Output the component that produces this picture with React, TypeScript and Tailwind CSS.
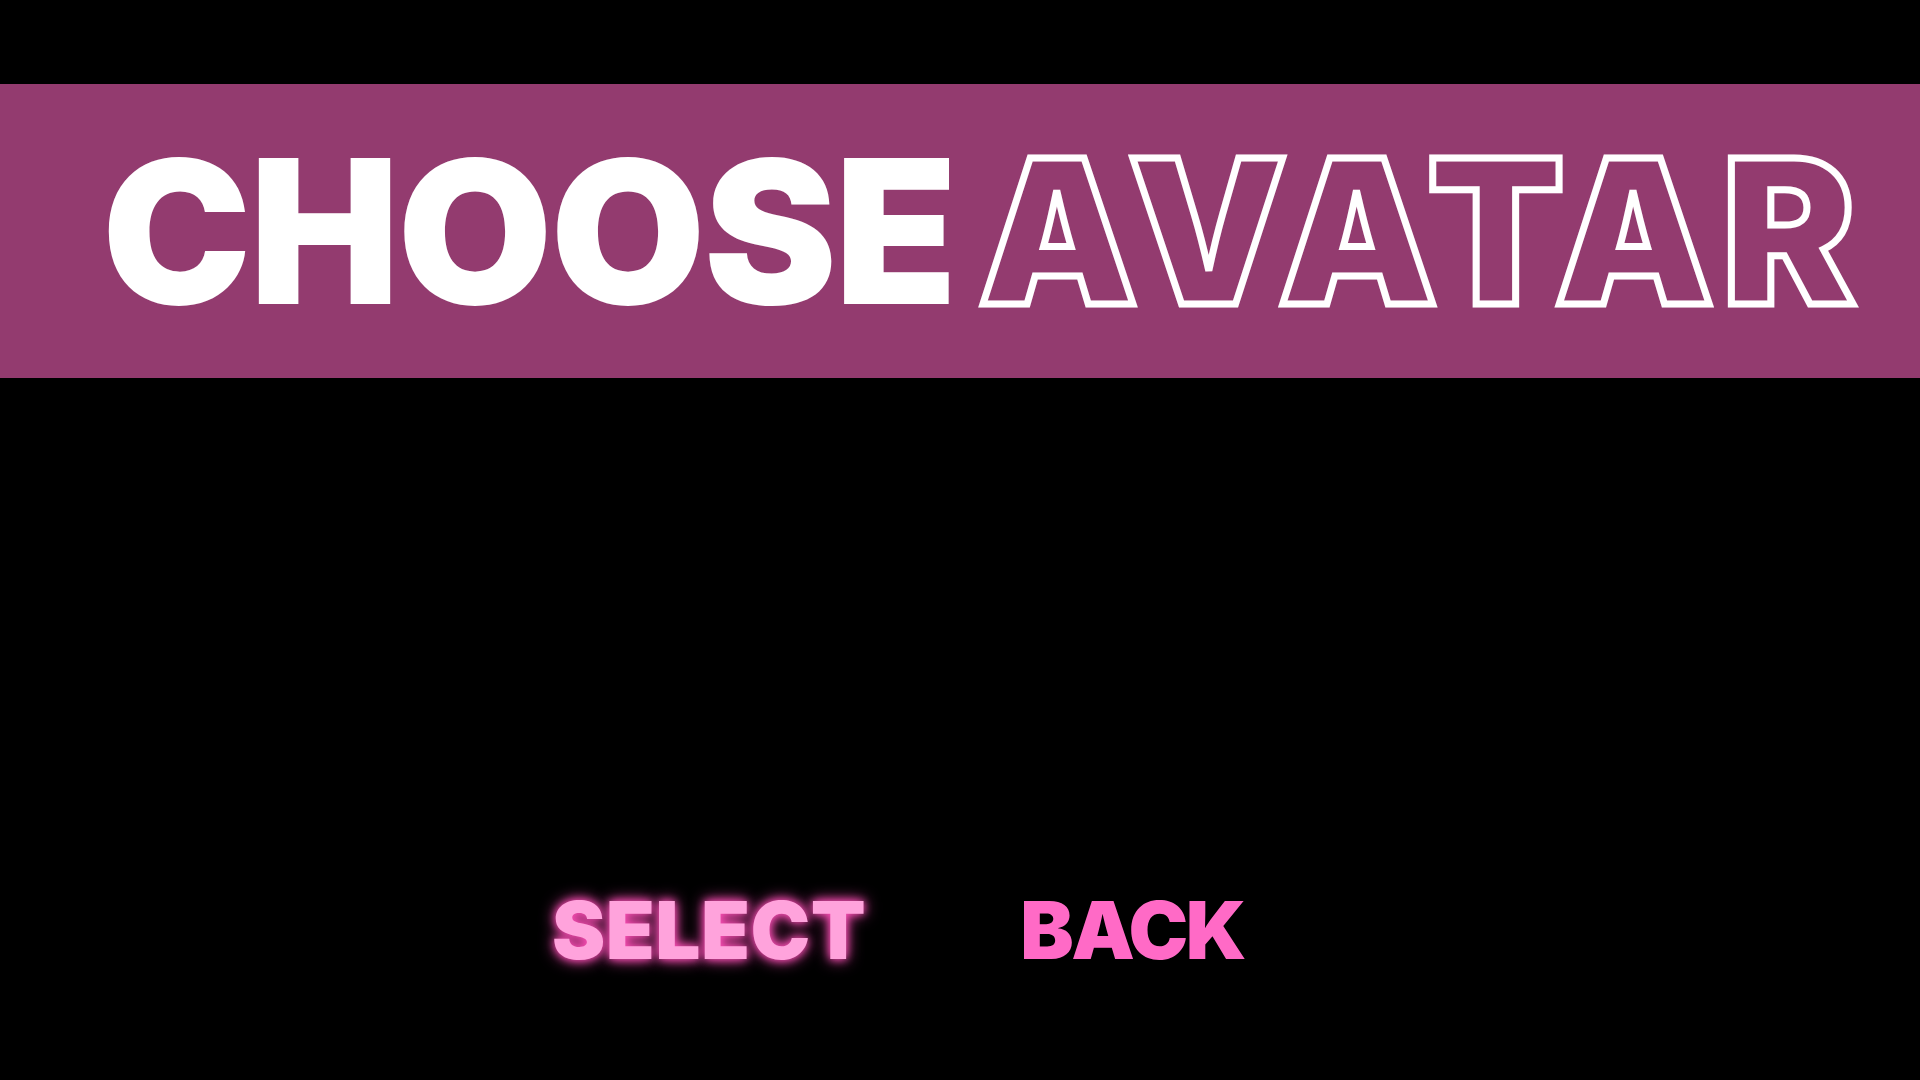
import React from "react";

export default function App() {
  return (
    <div className="w-[1920px] h-[1080px] bg-black overflow-hidden flex flex-col" style={{ fontFamily: "Inter, 'Noto Sans', sans-serif" }}>
      <div className="h-[84px]" />
      <div className="h-[294px] bg-[#933b6f] flex items-center pl-[102px]">
        <h1 className="text-[200px] leading-none font-black uppercase text-white flex items-baseline">
          <span className="tracking-[-2px]">CHOOSE</span>
          <span className="ml-[23px] tracking-[8.5px] text-transparent [-webkit-text-stroke:7px_white]">AVATAR</span>
        </h1>
      </div>
      <div className="flex-1 flex items-end pb-[110px]">
        <div className="flex items-center pl-[552px] gap-[154px]">
          <button className="text-[80px] leading-none font-black tracking-[0.5px] text-[#ffa3dc] [text-shadow:0_0_8px_#ff4fb8,0_0_16px_#ff4fb8]">SELECT</button>
          <button className="text-[80px] leading-none font-black tracking-[-2.5px] text-[#ff6ac6]">BACK</button>
        </div>
      </div>
    </div>
  );
}
